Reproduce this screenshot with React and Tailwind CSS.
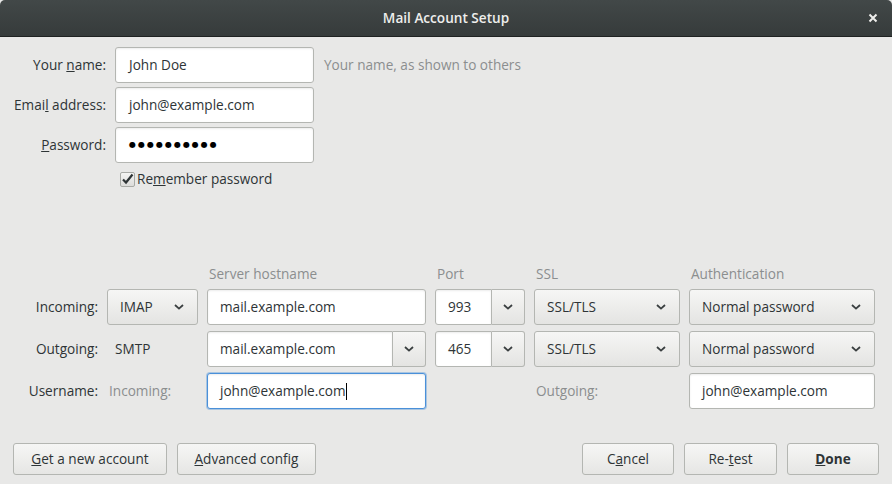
import React from 'react';

const font = { fontFamily: '"Open Sans", "Noto Sans", sans-serif' };

function Chevron() {
  return (
    <svg width="10" height="6" viewBox="0 0 10 6" className="shrink-0">
      <path d="M1 1 L5 4.6 L9 1" fill="none" stroke="#3a3f40" strokeWidth="1.8" />
    </svg>
  );
}

function TextBox({ children, className = '', focused = false }) {
  return (
    <div
      className={`h-[36px] flex items-center bg-white rounded-[3px] border text-[#2e3436] shadow-[inset_0_1px_2px_rgba(0,0,0,0.08)] ${
        focused ? 'border-[#4a90d9] ring-1 ring-[#4a90d9]/40' : 'border-[#b4b6b2]'
      } ${className}`}
    >
      {children}
    </div>
  );
}

function Select({ value, className = '' }) {
  return (
    <div
      className={`h-[36px] flex items-center justify-between rounded-[3px] border border-[#b4b6b2] bg-gradient-to-b from-[#f6f6f5] to-[#e4e4e2] text-[#2e3436] pl-[12px] pr-[13px] ${className}`}
    >
      <span>{value}</span>
      <Chevron />
    </div>
  );
}

function DropButton() {
  return (
    <div className="w-[33px] h-[36px] flex items-center justify-center rounded-r-[3px] border border-l-0 border-[#b4b6b2] bg-gradient-to-b from-[#f6f6f5] to-[#e4e4e2]">
      <Chevron />
    </div>
  );
}

function Button({ children, className = '' }) {
  return (
    <button
      className={`h-[32px] flex items-center justify-center rounded-[3px] border border-[#b4b6b2] bg-gradient-to-b from-[#f6f6f5] to-[#e6e6e4] text-[#2e3436] ${className}`}
    >
      {children}
    </button>
  );
}

export default function App() {
  return (
    <div className="w-[892px] h-[484px] flex flex-col bg-[#e8e8e7] overflow-hidden text-[13.6px]" style={font}>
      {/* title bar */}
      <header className="h-[37px] shrink-0 flex items-center justify-center relative rounded-t-[5px] bg-gradient-to-b from-[#424848] to-[#363b3b] border-b border-[#1f2222]">
        <span className="text-[13.6px] font-semibold text-[#eeeeec]">Mail Account Setup</span>
        <span className="absolute right-[14px] top-[13px]">
          <svg width="10" height="10" viewBox="0 0 10 10">
            <path d="M1.5 1.5 L8.5 8.5 M8.5 1.5 L1.5 8.5" stroke="#eeeeec" strokeWidth="2" />
          </svg>
        </span>
      </header>

      {/* identity form */}
      <section className="pt-[10px] flex flex-col gap-[4px] text-[#2e3436]">
        <div className="flex items-center">
          <label className="w-[106px] text-right">Your <u>n</u>ame:</label>
          <TextBox className="ml-[9px] w-[199px] pl-[13px]">John Doe</TextBox>
          <span className="ml-[10px] text-[#8b8e8f]">Your name, as shown to others</span>
        </div>
        <div className="flex items-center">
          <label className="w-[106px] text-right">Emai<u>l</u> address:</label>
          <TextBox className="ml-[9px] w-[199px] pl-[13px]">john@example.com</TextBox>
        </div>
        <div className="flex items-center">
          <label className="w-[106px] text-right"><u>P</u>assword:</label>
          <TextBox className="ml-[9px] w-[199px] pl-[13px]">
            <span className="text-[8px] tracking-[2px] text-black" style={{ fontFamily: '"DejaVu Sans", sans-serif' }}>
              ●●●●●●●●●●
            </span>
          </TextBox>
        </div>
        <div className="flex items-center pl-[120px] pt-[2px]">
          <span className="w-[15px] h-[15px] rounded-[2px] border border-[#a8aaa6] bg-gradient-to-b from-[#f4f4f3] to-[#dcdcda] flex items-center justify-center">
            <svg width="13" height="12" viewBox="0 0 13 12">
              <path d="M2 6.5 L5 9.5 L11.5 1.5" fill="none" stroke="#2e3436" strokeWidth="2.2" />
            </svg>
          </span>
          <span className="ml-[2px]">Re<u>m</u>ember password</span>
        </div>
      </section>

      {/* server settings */}
      <section className="mt-[76px] grid grid-cols-[98px_91px_219px_90px_146px_186px] gap-x-[9px] gap-y-[6px] items-center text-[#2e3436]">
        <div />
        <div />
        <div className="pl-[2px] text-[#8b8e8f] leading-[18px]">Server hostname</div>
        <div className="pl-[2px] text-[#8b8e8f] leading-[18px]">Port</div>
        <div className="pl-[2px] text-[#8b8e8f] leading-[18px]">SSL</div>
        <div className="pl-[2px] text-[#8b8e8f] leading-[18px]">Authentication</div>

        <div className="text-right">Incoming:</div>
        <Select value="IMAP" />
        <TextBox className="pl-[12px]">mail.example.com</TextBox>
        <div className="flex">
          <TextBox className="w-[57px] pl-[12px] rounded-r-none">993</TextBox>
          <DropButton />
        </div>
        <Select value="SSL/TLS" />
        <Select value="Normal password" />

        <div className="text-right">Outgoing:</div>
        <div className="pl-[8px]">SMTP</div>
        <div className="flex">
          <TextBox className="flex-1 pl-[12px] rounded-r-none">mail.example.com</TextBox>
          <DropButton />
        </div>
        <div className="flex">
          <TextBox className="w-[57px] pl-[12px] rounded-r-none">465</TextBox>
          <DropButton />
        </div>
        <Select value="SSL/TLS" />
        <Select value="Normal password" />

        <div className="text-right">Username:</div>
        <div className="pl-[2px] text-[#8b8e8f]">Incoming:</div>
        <TextBox focused className="pl-[12px]">
          john@example.com<span className="inline-block w-[1px] h-[17px] bg-black" />
        </TextBox>
        <div />
        <div className="pl-[2px] text-[#8b8e8f]">Outgoing:</div>
        <TextBox className="pl-[12px]">john@example.com</TextBox>
      </section>

      {/* footer buttons */}
      <footer className="mt-auto mb-[9px] flex items-center pl-[13px] pr-[13px]">
        <Button className="w-[154px]"><u>G</u>et a new account</Button>
        <Button className="ml-[10px] w-[139px]"><u>A</u>dvanced config</Button>
        <div className="flex-1" />
        <Button className="w-[92px]">C<u>a</u>ncel</Button>
        <Button className="ml-[10px] w-[93px]">Re-<u>t</u>est</Button>
        <Button className="ml-[10px] w-[92px] font-bold"><u>D</u>one</Button>
      </footer>
    </div>
  );
}
